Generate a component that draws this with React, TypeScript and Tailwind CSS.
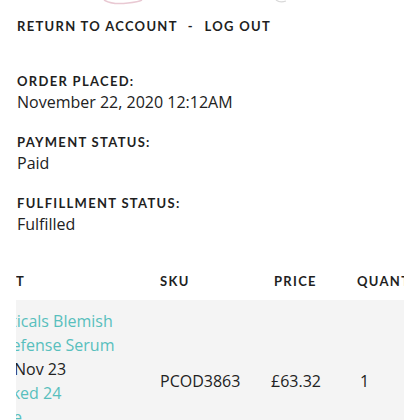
import React from "react";

// ── Data ───────────────────────────────────────────────────────────

const DETAILS = [
  { label: "Order placed:", value: "November 22, 2020 12:12AM" },
  { label: "Payment status:", value: "Paid" },
  { label: "Fulfillment status:", value: "Fulfilled" },
];

const heading = "font-['Lato',sans-serif] font-bold uppercase text-[#1f1f1f] text-[13px] tracking-[0.1em] leading-[16px]";
const body = "font-['Open_Sans',sans-serif] text-[16px] text-[#222]";

// ── Page ───────────────────────────────────────────────────────────

export default function App() {
  return (
    <div className="w-[420px] h-[420px] overflow-hidden bg-white">
      {/* logo remnant cut off at the top */}
      <svg className="block" width="420" height="6" viewBox="0 0 420 6">
        <path d="M104 0 Q112 5 128 3 Q138 2 142 0" stroke="#e9c9d3" strokeWidth="1.5" fill="none" />
        <path d="M276 0 Q280 3 286 1" stroke="#d9d9d9" strokeWidth="1.2" fill="none" />
      </svg>

      <div className={`${heading} mt-[12px] px-[17px]`}>
        Return to account <span className="mx-[6px]">-</span> Log out
      </div>

      <div className="mt-[39px] px-[17px] flex flex-col gap-[20px]">
        {DETAILS.map((d) => (
          <div key={d.label}>
            <div className={heading}>{d.label}</div>
            <div className={`${body} leading-[24px] mt-[1px]`}>{d.value}</div>
          </div>
        ))}
      </div>

      {/* ── Line items table (scrolled horizontally) ───────────── */}
      <div className="mt-[37px] ml-[16px] w-[388px] overflow-hidden">
        <div className={`${heading} flex h-[27px] whitespace-nowrap`}>
          <div className="w-[144px] shrink-0">T</div>
          <div className="w-[114px] shrink-0">SKU</div>
          <div className="w-[83px] shrink-0">Price</div>
          <div className="shrink-0">Quantity</div>
        </div>
        <div className={`${body} flex items-center bg-[#f4f4f4] pt-[9px] whitespace-nowrap`}>
          <div className="w-[144px] shrink-0 leading-[24px] text-[#58bfbd]">
            <div className="-ml-[5px]">ticals Blemish</div>
            <div className="-ml-[16px]">Defense Serum</div>
            <div className="-ml-[2px] text-[#222]">Nov 23</div>
            <div className="-ml-[12px]">cked 24</div>
            <div className="-ml-[3px]">e</div>
            <div>&nbsp;</div>
          </div>
          <div className="w-[114px] shrink-0">PCOD3863</div>
          <div className="w-[83px] shrink-0 -ml-[3px]">£63.32</div>
          <div className="shrink-0 pl-[6px]">1</div>
        </div>
      </div>
    </div>
  );
}
